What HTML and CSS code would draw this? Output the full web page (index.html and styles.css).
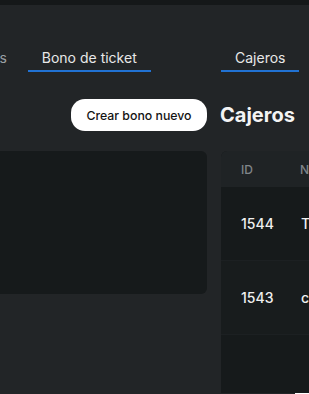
FILE: index.html
```html
<!DOCTYPE html>
<html lang="es">
<head>
<meta charset="utf-8">
<link rel="stylesheet" href="styles.css">
</head>
<body>
<div class="topbar"></div>
<div class="main">
  <section class="col col-left">
    <nav class="tabs tabs-left">
      <span class="tab">Tickets</span>
      <span class="tab active">Bono de ticket</span>
    </nav>
    <div class="toolbar">
      <button class="btn">Crear bono nuevo</button>
    </div>
    <div class="card"></div>
  </section>
  <section class="col col-right">
    <nav class="tabs">
      <span class="tab active">Cajeros</span>
    </nav>
    <h2 class="heading">Cajeros</h2>
    <div class="table">
      <div class="thead">
        <span class="cell id">ID</span>
        <span class="cell">Nombre</span>
      </div>
      <div class="row">
        <span class="cell id">1544</span>
        <span class="cell">Tomás</span>
      </div>
      <div class="row">
        <span class="cell id">1543</span>
        <span class="cell">carlos</span>
      </div>
      <div class="rest"></div>
    </div>
    <div class="footer-bit"></div>
  </section>
</div>
</body>
</html>
```
FILE: styles.css
```css
html, body {
  margin: 0;
  padding: 0;
}
body {
  width: 309px;
  height: 394px;
  overflow: hidden;
  background: #222527;
  font-family: Inter, "Noto Sans", sans-serif;
  color: #ececec;
}
.topbar {
  height: 5px;
  background: #151819;
}
.main {
  display: grid;
  grid-template-columns: 207px 200px;
  column-gap: 14px;
}
.col {
  display: flex;
  flex-direction: column;
  min-width: 0;
}
.tabs {
  display: flex;
  gap: 7px;
  margin-top: 43px;
  height: 24px;
}
.tabs-left {
  margin-left: -55px;
}
.tab {
  font-size: 14px;
  line-height: 20px;
  padding: 0 14px 2px;
  color: #9aa0a4;
  white-space: nowrap;
  border-bottom: 2px solid transparent;
}
.tab.active {
  color: #e8e8e8;
  border-bottom-color: #2172d3;
}
.toolbar {
  display: flex;
  justify-content: flex-end;
  margin-top: 27px;
}
.btn {
  height: 32px;
  width: 136px;
  padding: 0;
  border: none;
  border-radius: 14px;
  background: #ffffff;
  color: #141414;
  font-family: Inter, "Noto Sans", sans-serif;
  font-size: 12.3px;
  font-weight: 500;
  text-align: center;
}
.card {
  margin-top: 20px;
  height: 143px;
  background: #161a1b;
  border-radius: 0 6px 6px 0;
}
.heading {
  margin: 27px 0 0;
  height: 32px;
  line-height: 32px;
  font-size: 20px;
  font-weight: 700;
  color: #f4f4f4;
  margin-left: -1px;
}
.table {
  margin-top: 20px;
  height: 242px;
  background: #161a1b;
  border-radius: 6px 0 0 0;
  display: flex;
  flex-direction: column;
  overflow: hidden;
}
.thead {
  height: 36px;
  display: grid;
  grid-template-columns: 79px 1fr;
  align-items: center;
  background: #1f2325;
  font-size: 12px;
  font-weight: 500;
  color: #80868a;
}
.row {
  height: 74px;
  display: grid;
  grid-template-columns: 80px 1fr;
  align-items: center;
  font-size: 14px;
  font-weight: 500;
  color: #f0f0f0;
  border-bottom: 1px solid #1c2022;
  box-sizing: border-box;
}
.row + .row {
  background: #181c1d;
}
.cell.id {
  padding-left: 20px;
}
.cell {
  white-space: nowrap;
}
.rest {
  flex: 1;
}
.footer-bit {
  margin-left: 74px;
  height: 10px;
  background: #ffffff;
}
```
